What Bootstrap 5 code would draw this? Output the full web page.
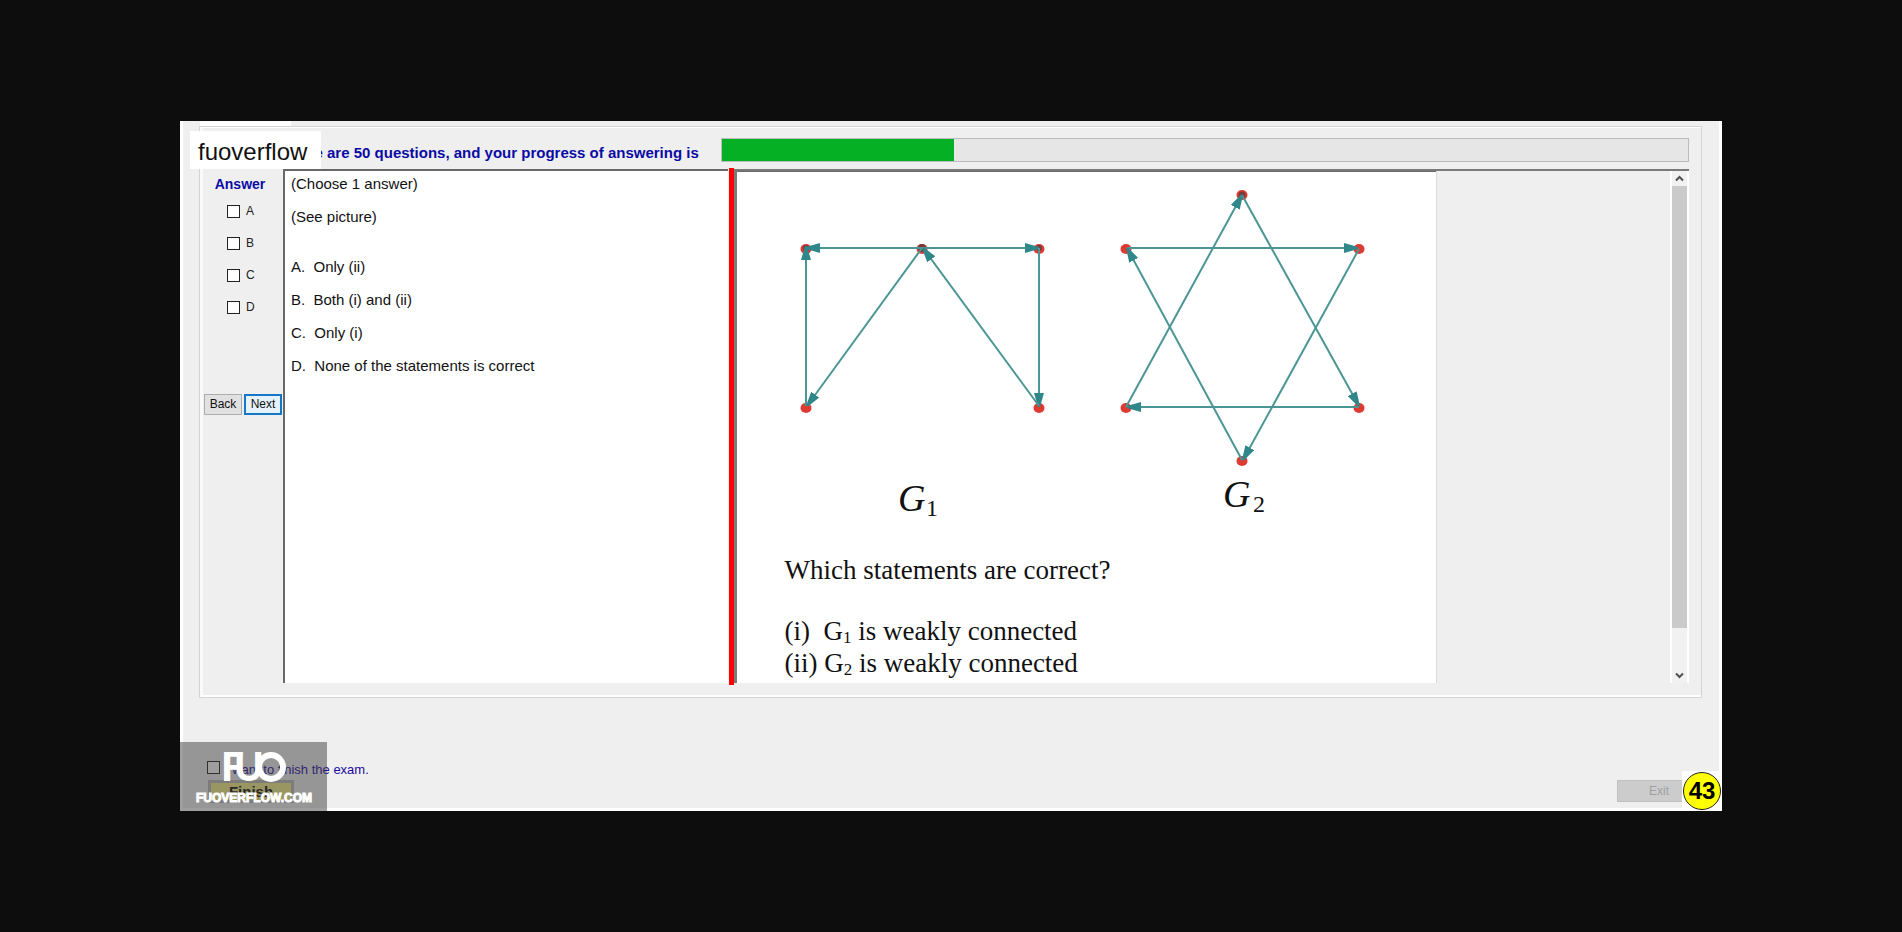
<!DOCTYPE html>
<html lang="en">
<head>
<meta charset="utf-8">
<meta name="viewport" content="width=device-width, initial-scale=1">
<title>Exam client</title>
<link rel="stylesheet" href="https://cdn.jsdelivr.net/npm/bootstrap@5.3.0/dist/css/bootstrap.min.css">
<style>
  body { background: #0d0d0d; color: #111; font-family: "Liberation Sans", Arial, sans-serif; padding: 0 180px; }
  .exam-window { background: #efefef; border: solid #fff; border-width: 0 3px 3px; }
  .tab-stub { width: 91px; height: 6px; margin-left: 17px; background: #fff; }
  .group-box { margin: -1px 17px 0 16px; border: 1px solid #d4d4d4; box-shadow: inset 0 1px #fff, inset 3px 0 #fafafa, inset 0 -2px #fff; padding: 0 12px 14px 3px; }
  .top-line { height: 42px; padding: 11px 0 0 79px; }
  .brand-tag { left: -13px; top: 4px; width: 131px; height: 38px; padding: 2px 0 0 8px; background: #fff; font-size: 24px; line-height: 37px; color: #111; }
  .navy-bold { color: #0a0aa5; font-weight: 700; font-size: 15px; line-height: 18px; }
  .top-line .navy-bold { padding-top: 6px; }
  .progress-track { height: 24px; margin-left: 22px; border: 1px solid #bcbcbc; border-radius: 0; background: #e6e6e6; }
  .progress-track .progress-bar { background: #06b025; }
  .work-area { display: grid; grid-template-columns: 80px 7fr 6px 15fr; min-height: 514px; }
  .answer-col .navy-bold { font-size: 14px; margin: 6px 6px 0 0; }
  .choices { gap: 19px; margin: 12px 0 0 24px; }
  .choice { height: 13px; gap: 6px; font-size: 12px; line-height: 13px; color: #222; }
  .box { appearance: none; width: 13px; height: 13px; margin: 0; border: 1px solid #222; border-radius: 0; background: #fff; flex: none; }
  .box:checked { background: #0078d7; }
  .nav-pair { margin: 80px 0 0 1px; gap: 2px; }
  .flat-btn { width: 38px; height: 21px; padding: 0; border: 1px solid #adadad; border-radius: 0; background: #e1e1e1; font-size: 12px; line-height: 17px; color: #111; }
  .flat-btn.is-default { border: 2px solid #1477c8; background: #e5f1fb; }
  .text-pane { background: #fff; border: solid #696969; border-width: 2px 0 0 2px; padding: 4px 0 0 6px; font-size: 15px; line-height: 17px; }
  .text-pane p { margin: 0 0 16px; white-space: pre-wrap; }
  .text-pane .options { margin-top: 33px; }
  .splitter { background: #f00; margin: -1px 0 -2px 1px; }
  .picture-pane { border: solid #7a7a7a; border-width: 2px 0 0 3px; }
  .picture { width: 699px; background: #fff; border: solid #696969; border-width: 1px 0 0; box-shadow: 1px 0 #dcdcdc; }
  .picture svg { display: block; width: 100%; }
  .statements { padding: 7px 0 0 47px; font-family: "Liberation Serif", "Times New Roman", serif; font-size: 27px; line-height: 32px; white-space: pre-wrap; }
  .statements p { margin: 0; }
  .statements .first { margin-bottom: 29px; }
  .statements sub { font-size: 17px; bottom: -3px; line-height: 1; }
  .scroll-rail { width: 19px; background: #f1f1f1; border: solid #fff; border-width: 0 2px; }
  .scroll-rail svg { display: block; width: 15px; height: 15px; }
  .scroll-thumb { flex: 439 0 0; background: #cacaca; }
  .scroll-rest { flex: 40 0 0; }
  .foot { height: 110px; padding: 63px 0 0 24px; }
  .finish-check { height: 13px; gap: 5px; font-size: 13px; line-height: 17px; color: #1d0aa0; }
  .finish-btn { display: block; margin: 6px 0 0 1px; width: 86px; height: 23px; padding: 0; border: 3px solid #bababa; border-radius: 0; background: #f4ee86; color: #111; font-weight: 700; font-size: 15px; line-height: 18px; }
  .exit-btn { width: 84px; height: 22px; margin: 19px 18px 0 0; padding: 0; border: 1px solid #c0c0c0; border-radius: 0; font-size: 12px; line-height: 20px; }
  .exit-btn:disabled { background: #ccc; color: #a0a0a0; border-color: #c0c0c0; opacity: 1; }
  .count-badge { right: -3px; bottom: -3px; width: 40px; height: 40px; background: #fff; padding: 1px; }
  .count-badge span { width: 38px; height: 38px; border: 1px solid #222; border-radius: 50%; background: #ff0; font-weight: 700; font-size: 24px; line-height: 36px; color: #000; }
  .watermark { left: -3px; bottom: -3px; width: 147px; height: 69px; background: rgba(62, 62, 62, .5); pointer-events: none; }
  .watermark svg { display: block; }
</style>
</head>
<body class="min-vh-100 d-flex align-items-center">
<main class="exam-window position-relative w-100">
  <div class="tab-stub"></div>
  <section class="group-box">
    <header class="top-line position-relative d-flex align-items-start">
      <div class="navy-bold text-nowrap" id="progress-text">There are 50 questions, and your progress of answering is</div>
      <div class="progress progress-track flex-grow-1" role="progressbar" aria-labelledby="progress-text" aria-valuenow="24" aria-valuemin="0" aria-valuemax="100">
        <div class="progress-bar" style="width: 24%"></div>
      </div>
      <div class="brand-tag position-absolute">fuoverflow</div>
    </header>

    <div class="work-area">
      <aside class="answer-col">
        <div class="navy-bold text-center">Answer</div>
        <div class="choices d-flex flex-column">
          <label class="choice d-flex"><input class="box" type="checkbox" name="a">A</label>
          <label class="choice d-flex"><input class="box" type="checkbox" name="b">B</label>
          <label class="choice d-flex"><input class="box" type="checkbox" name="c">C</label>
          <label class="choice d-flex"><input class="box" type="checkbox" name="d">D</label>
        </div>
        <div class="nav-pair d-flex">
          <button type="button" class="btn flat-btn">Back</button>
          <button type="button" class="btn flat-btn is-default">Next</button>
        </div>
      </aside>

      <article class="text-pane">
        <p>(Choose 1 answer)</p>
        <p>(See picture)</p>
        <div class="options">
          <p>A.  Only (ii)</p>
          <p>B.  Both (i) and (ii)</p>
          <p>C.  Only (i)</p>
          <p>D.  None of the statements is correct</p>
        </div>
      </article>

      <div class="splitter"></div>

      <div class="picture-pane d-flex justify-content-between">
        <figure class="picture m-0">
          <svg viewBox="737 172 699 375" role="img" aria-label="Directed graphs G1 and G2">
            <defs>
              <marker id="tip" markerUnits="userSpaceOnUse" markerWidth="14" markerHeight="10" refX="14" refY="5" orient="auto"><path d="M0 0L14 4V6L0 10Z" fill="#2f8789"/></marker>
            </defs>
            <g fill="#dd3a32">
              <ellipse cx="806" cy="249" rx="5.5" ry="5"/><ellipse cx="922" cy="249" rx="5.5" ry="5"/><ellipse cx="1039" cy="249" rx="5.5" ry="5"/>
              <ellipse cx="806" cy="408" rx="5.5" ry="5"/><ellipse cx="1039" cy="408" rx="5.5" ry="5"/>
              <ellipse cx="1242" cy="195" rx="5.5" ry="5"/><ellipse cx="1126" cy="249" rx="5.5" ry="5"/><ellipse cx="1359" cy="249" rx="5.5" ry="5"/>
              <ellipse cx="1126" cy="408" rx="5.5" ry="5"/><ellipse cx="1359" cy="408" rx="5.5" ry="5"/><ellipse cx="1242" cy="461" rx="5.5" ry="5"/>
            </g>
            <g fill="#7b3a3a"><circle cx="922" cy="248" r="4"/><circle cx="806" cy="248" r="3"/><circle cx="1039" cy="248" r="3"/><circle cx="1242" cy="195" r="3.5"/></g>
            <g fill="none" stroke="#4b9695" stroke-width="2">
              <path d="M922 248H806" marker-end="url(#tip)"/><path d="M922 248H1039" marker-end="url(#tip)"/>
              <path d="M806 406V246" marker-end="url(#tip)"/><path d="M1039 248V407" marker-end="url(#tip)"/>
              <path d="M922 248L807 406" marker-end="url(#tip)"/><path d="M1039 406L923 248" marker-end="url(#tip)"/>
              <path d="M1127 248H1358" marker-end="url(#tip)"/><path d="M1359 407H1127" marker-end="url(#tip)"/>
              <path d="M1126 407L1242 195" marker-end="url(#tip)"/><path d="M1242 195L1359 406" marker-end="url(#tip)"/>
              <path d="M1359 249L1243 460" marker-end="url(#tip)"/><path d="M1242 460L1127 248" marker-end="url(#tip)"/>
            </g>
            <g font-family="Liberation Serif, Times New Roman, serif" fill="#111">
              <text x="898" y="511" font-size="38" font-style="italic">G</text><text x="926" y="516" font-size="24">1</text>
              <text x="1223" y="507" font-size="38" font-style="italic">G</text><text x="1253" y="512" font-size="24">2</text>
            </g>
          </svg>
          <figcaption class="statements"><p class="first">Which statements are correct?</p><p>(i)  G<sub>1</sub> is weakly connected</p><p>(ii) G<sub>2</sub> is weakly connected</p></figcaption>
        </figure>
        <div class="scroll-rail d-flex flex-column" aria-hidden="true">
          <svg viewBox="0 0 15 15"><path d="M4 9.500L7.500 6L11 9.500" fill="none" stroke="#505050" stroke-width="2"/></svg>
          <div class="scroll-thumb"></div>
          <div class="scroll-rest"></div>
          <svg viewBox="0 0 15 15"><path d="M4 5.500L7.500 9L11 5.500" fill="none" stroke="#505050" stroke-width="2"/></svg>
        </div>
      </div>
    </div>
  </section>

  <footer class="foot d-flex justify-content-between">
    <div>
      <label class="finish-check d-flex"><input class="box" type="checkbox" name="finish">I want to finish the exam.</label>
      <button type="button" class="btn finish-btn">Finish</button>
    </div>
    <button type="button" class="btn exit-btn" disabled>Exit</button>
  </footer>

  <div class="count-badge position-absolute"><span class="d-block text-center">43</span></div>
  <div class="watermark position-absolute">
    <svg width="147" height="69" viewBox="0 0 147 69" fill="#fff" role="img" aria-label="FUO fuoverflow.com">
      <g font-family="Lato, sans-serif" font-weight="900" font-size="40">
        <text x="41" y="39">F</text><text x="54" y="39">U</text>
      </g>
      <circle cx="91" cy="25" r="12" fill="none" stroke="#fff" stroke-width="6"/>
      <text x="16" y="60" font-family="Liberation Sans, Arial, sans-serif" font-weight="700" font-size="12" stroke="#fff" stroke-width="1">FUOVERFLOW.COM</text>
    </svg>
  </div>
</main>
<script src="https://cdn.jsdelivr.net/npm/bootstrap@5.3.0/dist/js/bootstrap.bundle.min.js"></script>
</body>
</html>
